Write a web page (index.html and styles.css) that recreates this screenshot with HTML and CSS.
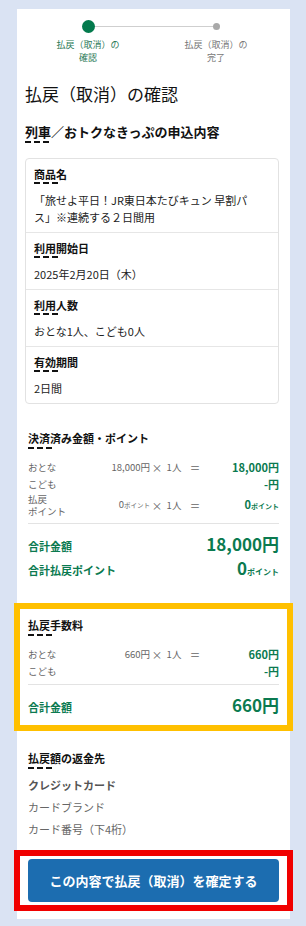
FILE: index.html
```html
<!DOCTYPE html>
<html lang="ja">
  <head>
    <meta charset="UTF-8" />
    <meta name="viewport" content="width=device-width, initial-scale=1.0" />
    <title>払戻（取消）の確認</title>
    <link rel="stylesheet" href="styles.css">
  </head>

  <body>
    <div class="page">
      <div class="stepper">
        <div class="step step-current">
          <div class="dot-wrap"><span class="dot"></span></div>
          <p>払戻（取消）の<br>確認</p>
        </div>
        <div class="step">
          <div class="dot-wrap"><span class="dot"></span></div>
          <p>払戻（取消）の<br>完了</p>
        </div>
      </div>

      <h1 class="title">払戻（取消）の確認</h1>

      <section class="apply">
        <h2 class="heading heading-lg">列車／おトクなきっぷの申込内容</h2>
        <div class="card">
          <div class="card-row">
            <h3 class="label">商品名</h3>
            <p class="value">「旅せよ平日！JR東日本たびキュン 早割パ<br>ス」※連続する２日間用</p>
          </div>
          <div class="card-row">
            <h3 class="label">利用開始日</h3>
            <p class="value">2025年2月20日（木）</p>
          </div>
          <div class="card-row">
            <h3 class="label">利用人数</h3>
            <p class="value">おとな1人、こども0人</p>
          </div>
          <div class="card-row">
            <h3 class="label">有効期間</h3>
            <p class="value">2日間</p>
          </div>
        </div>
      </section>

      <section class="block paid">
        <h2 class="heading">決済済み金額・ポイント</h2>
        <div class="details">
          <div class="detail">
            <span>おとな</span>
            <span class="amt">18,000円</span>
            <span class="sym">×</span>
            <span class="cnt">1人</span>
            <span class="sym">＝</span>
            <span class="total">18,000円</span>
          </div>
          <div class="detail">
            <span>こども</span>
            <span></span><span></span><span></span><span></span>
            <span class="total">-円</span>
          </div>
          <div class="detail">
            <span class="two-line">払戻<br>ポイント</span>
            <span class="amt">0<small>ポイント</small></span>
            <span class="sym">×</span>
            <span class="cnt">1人</span>
            <span class="sym">＝</span>
            <span class="total">0<small>ポイント</small></span>
          </div>
        </div>
        <div class="sums">
          <p class="sum"><span>合計金額</span><strong>18,000円</strong></p>
          <p class="sum"><span>合計払戻ポイント</span><strong>0<small>ポイント</small></strong></p>
        </div>
      </section>

      <section class="block fee">
        <h2 class="heading">払戻手数料</h2>
        <div class="details">
          <div class="detail">
            <span>おとな</span>
            <span class="amt">660円</span>
            <span class="sym">×</span>
            <span class="cnt">1人</span>
            <span class="sym">＝</span>
            <span class="total">660円</span>
          </div>
          <div class="detail">
            <span>こども</span>
            <span></span><span></span><span></span><span></span>
            <span class="total">-円</span>
          </div>
        </div>
        <div class="sums">
          <p class="sum"><span>合計金額</span><strong>660円</strong></p>
        </div>
      </section>

      <section class="block refund">
        <h2 class="heading">払戻額の返金先</h2>
        <ul class="refund-list">
          <li class="refund-method">クレジットカード</li>
          <li>カードブランド</li>
          <li>カード番号（下4桁）</li>
        </ul>
      </section>

      <div class="submit">
        <button>この内容で払戻（取消）を確定する</button>
      </div>
    </div>
  </body>
</html>
```

FILE: styles.css
```css
* {
  margin: 0;
  padding: 0;
  box-sizing: border-box;
}

body {
  font-family: "Noto Sans CJK JP", "Noto Sans", sans-serif;
  background-color: #dae3f3;
  color: #111;
  padding-top: 9px;
  min-height: 100vh;
}

.page {
  width: 273px;
  margin-left: 17px;
  background-color: #fff;
  padding: 11px 11px 14px 8px;
}

/* stepper */
.stepper {
  position: relative;
  display: flex;
  column-gap: 28px;
  padding-left: 13px;
}

.stepper::before {
  content: "";
  position: absolute;
  top: 6px;
  left: 63px;
  width: 128px;
  height: 1px;
  background-color: #cfcfcf;
}

.step {
  width: 100px;
  display: flex;
  flex-direction: column;
  align-items: center;
  color: #777;
}

.dot-wrap {
  height: 13px;
  display: flex;
  align-items: center;
  position: relative;
}

.dot {
  display: block;
  width: 7px;
  height: 7px;
  border-radius: 50%;
  background-color: #a9a9a9;
}

.step-current {
  color: #2b7a57;
}

.step-current .dot {
  width: 13px;
  height: 13px;
  background-color: #037a4d;
}

.step p {
  margin-top: 4.5px;
  font-size: 9px;
  line-height: 13px;
  text-align: center;
}

.title {
  margin-top: 18.5px;
  font-size: 17px;
  font-weight: 400;
  line-height: 24px;
}

/* headings */
.heading {
  font-size: 11px;
  font-weight: 700;
  line-height: 18px;
}

.heading-lg {
  font-size: 13px;
}

.heading::after,
.label::after {
  content: "";
  display: block;
  width: 24px;
  height: 2px;
  background: repeating-linear-gradient(90deg, #111 0 6px, transparent 6px 9px);
}

.apply {
  margin-top: 17px;
}

/* card */
.card {
  margin-top: 15px;
  border: 1px solid #e2e2e2;
  border-radius: 4px;
}

.card-row {
  padding: 8px 8px 6px;
}

.card-row + .card-row {
  border-top: 1px solid #e6e6e6;
}

.label {
  font-size: 11px;
  font-weight: 700;
  line-height: 15px;
}

.value {
  margin-top: 8px;
  font-size: 11px;
  line-height: 17px;
  color: #222;
}

/* amount blocks */
.block {
  padding-left: 3px;
}

.paid {
  margin-top: 25px;
}

.details {
  margin-top: 9.5px;
}

.detail {
  display: grid;
  grid-template-columns: 62px 60px 14px 20px 22px 1fr;
  align-items: center;
  font-size: 9.5px;
  line-height: 17px;
  color: #666;
}

.two-line {
  line-height: 12.5px;
}

.amt {
  text-align: right;
}

.sym,
.cnt {
  text-align: center;
}

.sym {
  font-size: 10.5px;
}

.total {
  text-align: right;
  font-size: 11px;
  font-weight: 700;
  color: #0b7a50;
}

.amt small {
  font-size: 6.5px;
}

.total small {
  font-size: 7px;
}

.sums {
  margin-top: 5.5px;
  border-top: 1px solid #e3e3e3;
  padding-top: 9px;
}

.sum {
  display: flex;
  justify-content: space-between;
  align-items: baseline;
  line-height: 22px;
  color: #0b7a50;
}

.sum span {
  font-size: 11px;
  font-weight: 700;
}

.sum strong {
  font-size: 17px;
}

.sum small {
  font-size: 8px;
}

.fee {
  margin: 26px -8px 0 -5px;
  padding: 7px 8px 7px 8px;
  outline: 6px solid #ffc000;
}

.fee .sums {
  margin-top: 4.5px;
}

.refund {
  margin-top: 24px;
}

.refund-list {
  list-style: none;
  margin-top: 5px;
}

.refund-list li {
  font-size: 11px;
  line-height: 22px;
  color: #666;
}

.refund-list .refund-method {
  font-weight: 700;
  color: #555;
}

/* submit */
.submit {
  margin: 16px -8px 0 -5px;
  padding: 3px 8px;
  outline: 6px solid #f00000;
}

.submit button {
  all: unset;
  display: block;
  width: 100%;
  height: 43px;
  text-align: center;
  font-family: "Noto Sans CJK JP", "Noto Sans", sans-serif;
  font-size: 13px;
  font-weight: 700;
  color: #fff;
  background-color: #1c6db0;
  border-radius: 4px;
  cursor: pointer;
}
```
